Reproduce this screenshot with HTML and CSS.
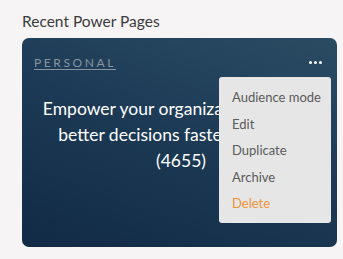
FILE: index.html
```html
<!DOCTYPE html>
<html lang="en">
<head>
    <meta charset="UTF-8">
    <meta name="viewport" content="width=device-width, initial-scale=1.0">
    <title>Recent Power Pages</title>
    <link rel="stylesheet" href="styles.css">
</head>
<body>

    <h2 class="section-title">Recent Power Pages</h2>

    <div class="page-card">
        <div class="card-top">
            <a class="card-tag" href="#">PERSONAL</a>
            <svg class="card-more" width="13" height="3" viewBox="0 0 13 3">
                <circle cx="1.5" cy="1.5" r="1.5" fill="#fff"/>
                <circle cx="6.5" cy="1.5" r="1.5" fill="#fff"/>
                <circle cx="11.5" cy="1.5" r="1.5" fill="#fff"/>
            </svg>
        </div>
        <p class="card-text">Empower your organization to make better decisions faster with data (4655)</p>

        <ul class="card-menu">
            <li>Audience mode</li>
            <li>Edit</li>
            <li>Duplicate</li>
            <li>Archive</li>
            <li class="danger">Delete</li>
        </ul>
    </div>

</body>
</html>
```

FILE: styles.css
```css
body {
    margin: 0;
    padding: 12px 6px 0 22px;
    background: #f6f4f5;
    font-family: Lato, "Noto Sans", sans-serif;
}

.section-title {
    margin: 0 0 8px;
    font-size: 15.5px;
    font-weight: 400;
    color: #3b3b3b;
    line-height: 18px;
}

.page-card {
    position: relative;
    width: 315px;
    height: 209px;
    box-sizing: border-box;
    padding: 16px 15px 0 12px;
    border-radius: 7px;
    background: linear-gradient(200deg, #2b4b63 0%, #1d3b56 45%, #112a45 100%);
    overflow: hidden;
}

.card-top {
    display: flex;
    justify-content: space-between;
    align-items: center;
    height: 16px;
}

.card-tag {
    font-size: 12px;
    letter-spacing: 2.6px;
    color: #8794a1;
    text-decoration: underline;
    text-underline-offset: 2px;
}

.card-more {
    display: block;
}

.card-text {
    margin: 26px -3px 0 3px;
    text-align: center;
    color: #fff;
    font-size: 17.5px;
    line-height: 26px;
}

.card-menu {
    position: absolute;
    top: 39px;
    left: 197px;
    width: 112px;
    margin: 0;
    padding: 7px 0 6px;
    list-style: none;
    background: #e6e6e6;
    border-radius: 3px;
}

.card-menu li {
    padding: 0 13px;
    font-size: 13px;
    line-height: 26.5px;
    white-space: nowrap;
    color: #5a5a5a;
}

.card-menu .danger {
    color: #f09436;
}
```
